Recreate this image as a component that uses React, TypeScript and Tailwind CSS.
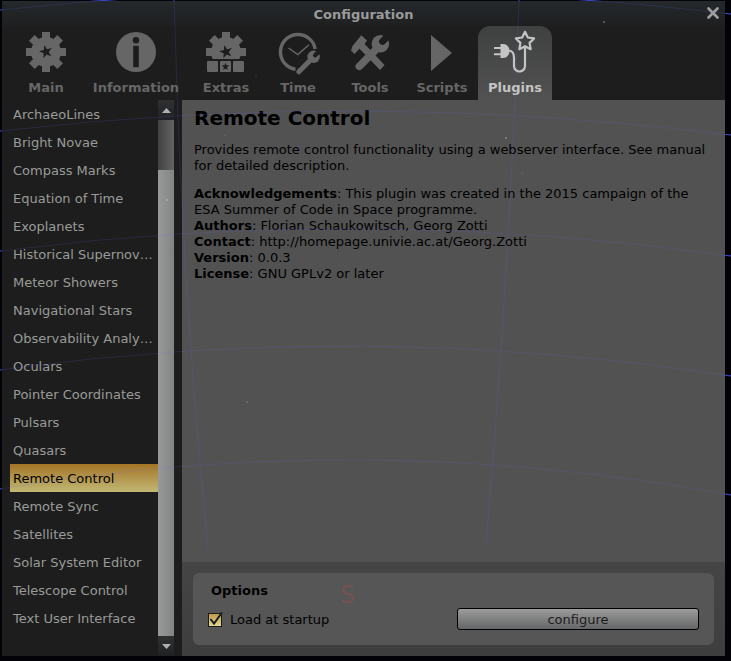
import { useState, type ReactNode } from 'react';

const plugins = [
  'ArchaeoLines',
  'Bright Novae',
  'Compass Marks',
  'Equation of Time',
  'Exoplanets',
  'Historical Supernovae',
  'Meteor Showers',
  'Navigational Stars',
  'Observability Analysis',
  'Oculars',
  'Pointer Coordinates',
  'Pulsars',
  'Quasars',
  'Remote Control',
  'Remote Sync',
  'Satellites',
  'Solar System Editor',
  'Telescope Control',
  'Text User Interface',
];

// Five pointed star as an SVG points string
const star = (cx: number, cy: number, outer: number, inner: number, turn: number) =>
  Array.from({ length: 10 }, (_, i) => {
    const r = i % 2 === 0 ? outer : inner;
    const a = ((i * 36 + turn - 90) * Math.PI) / 180;
    return `${(cx + r * Math.cos(a)).toFixed(2)},${(cy + r * Math.sin(a)).toFixed(2)}`;
  }).join(' ');

function Icon({ children }: { children: ReactNode }) {
  return (
    <svg viewBox="0 0 40 40" className="size-10 overflow-visible" fill="currentColor" aria-hidden="true">
      {children}
    </svg>
  );
}

function Gear() {
  return (
    <>
      <circle cx="20" cy="20" r="15" />
      {[0, 45, 90, 135].map((angle) => (
        <rect key={angle} x="16" y="0" width="8" height="40" transform={`rotate(${angle} 20 20)`} />
      ))}
      <polygon points={star(20, 19.8, 7, 2.7, -14)} className="fill-[#1d1d1d]" />
    </>
  );
}

const MainIcon = () => (
  <Icon>
    <Gear />
  </Icon>
);

const InfoIcon = () => (
  <Icon>
    <circle cx="20" cy="20" r="20" />
    <g className="fill-[#1d1d1d]">
      <circle cx="20" cy="8.3" r="3.2" />
      <rect x="17.2" y="13.8" width="5.6" height="21.4" />
    </g>
  </Icon>
);

const ExtrasIcon = () => (
  <Icon>
    <clipPath id="gear-top">
      <rect x="0" y="0" width="40" height="27" />
    </clipPath>
    <g clipPath="url(#gear-top)">
      <Gear />
    </g>
    <rect x="1" y="29" width="11" height="11" rx="1" />
    <rect x="14" y="29" width="11" height="11" rx="1" />
    <rect x="27" y="29" width="11" height="11" rx="1" />
    <polygon points={star(19.5, 34.7, 4, 1.7, 0)} className="fill-[#1d1d1d]" />
  </Icon>
);

const TimeIcon = () => (
  <Icon>
    <g fill="none" stroke="currentColor">
      <path d="M17.5 37.3A17.5 17.5 0 1 1 37.2 17" strokeWidth="3.4" />
      <path d="M10.5 16l9.3 6.5L31 12.8" strokeWidth="1.5" />
      <path d="M20.8 39.8L33 27.5" strokeWidth="5" strokeLinecap="round" />
    </g>
    <circle cx="35.6" cy="24.8" r="6.2" />
    <path d="M37.2 23.2L44 16.4" className="stroke-[#1d1d1d]" strokeWidth="4.4" strokeLinecap="round" />
  </Icon>
);

const ToolsIcon = () => (
  <Icon>
    <path d="M11.3 3.3L17 8.6L14.6 12L34.5 33L30 38L9.5 16.8L4.5 22L1 18.5L2.5 14Z" />
    <path d="M9.3 34.3L26 17.5" stroke="currentColor" strokeWidth="7.5" strokeLinecap="round" />
    <circle cx="30.4" cy="11.8" r="8.8" />
    <path d="M32.6 9.4L42 0" className="stroke-[#1d1d1d]" strokeWidth="7" strokeLinecap="round" />
  </Icon>
);

const ScriptsIcon = () => (
  <Icon>
    <path d="M9 3L30 21L9 39Z" />
  </Icon>
);

const PluginsIcon = () => (
  <Icon>
    <path d="M5.500 12h2.500c4 0 6.500 3.500 6.500 7s-2.500 7-6.500 7h-2.500Z" />
    <g fill="none" stroke="currentColor" strokeWidth="2.2">
      <path d="M-1 16h7M-1 22.300h7" strokeWidth="2" />
      <path d="M13 18.500c4 0 6 3 6 7v8.500a5.500 5.500 0 0 0 11 0V14" />
      <polygon points={star(30, 9.4, 9.6, 4.8, 0)} strokeLinejoin="round" />
    </g>
  </Icon>
);

const tabs = [
  { name: 'Main', width: 'w-[72px]', icon: <MainIcon /> },
  { name: 'Information', width: 'w-[108px]', icon: <InfoIcon /> },
  { name: 'Extras', width: 'w-[72px]', icon: <ExtrasIcon /> },
  { name: 'Time', width: 'w-[72px]', icon: <TimeIcon /> },
  { name: 'Tools', width: 'w-[72px]', icon: <ToolsIcon /> },
  { name: 'Scripts', width: 'w-[72px]', icon: <ScriptsIcon /> },
  { name: 'Plugins', width: 'w-[74px]', icon: <PluginsIcon /> },
];

// Celestial grid, drawn once behind the window and once faintly through it
function SkyGrid({ className }: { className: string }) {
  return (
    <svg
      viewBox="0 0 731 661"
      preserveAspectRatio="none"
      className={`pointer-events-none absolute inset-0 size-full ${className}`}
      fill="none"
      stroke="currentColor"
      aria-hidden="true"
    >
      <path d="M0 10Q365 -30 731 14" />
      <path d="M0 131Q365 89 731 135" />
      <path d="M0 251Q365 204 731 256" />
      <path d="M0 370Q365 319 731 376" />
      <path d="M0 489Q365 428 731 495" />
      <path d="M174 0Q181 280 208 550" />
      <path d="M519 0Q510 260 486 545" />
    </svg>
  );
}

function Stars() {
  return (
    <svg
      viewBox="0 0 731 661"
      preserveAspectRatio="none"
      className="pointer-events-none absolute inset-0 size-full fill-white opacity-30"
      aria-hidden="true"
    >
      <circle cx="604" cy="22" r="1" />
      <circle cx="167" cy="200" r="1" />
      <circle cx="506" cy="138" r="1" />
      <circle cx="247" cy="402" r="0.8" />
      <circle cx="225" cy="135" r="0.6" />
      <circle cx="522" cy="173" r="0.6" />
      <circle cx="256" cy="76" r="0.6" />
    </svg>
  );
}

function App() {
  const [activeTab, setActiveTab] = useState('Plugins');
  const [selected, setSelected] = useState('Remote Control');
  const [loadAtStartup, setLoadAtStartup] = useState(true);

  return (
    <div className="relative flex min-h-screen bg-[#020208] pt-px pr-1.5 pb-[5px] pl-0.5 font-['DejaVu_Sans',sans-serif] text-[13px] leading-4">
      <SkyGrid className="text-[#3546c8]" />

      <div className="relative flex min-w-0 flex-1 flex-col bg-[#1d1d1d]">
        {/* Title bar */}
        <header className="relative flex h-[25px] items-center justify-center bg-linear-to-b from-[#25292c] to-[#1e1f20] pt-0.5">
          <h1 className="font-bold text-[#999b9b]">Configuration</h1>
          <button type="button" aria-label="Close" className="absolute top-1.5 right-1.5 text-[#a0a0a0]">
            <svg viewBox="0 0 12 12" className="size-3" stroke="currentColor" strokeWidth="2.6" strokeLinecap="round">
              <path d="M1.500 1.500l9 9M10.500 1.500l-9 9" />
            </svg>
          </button>
        </header>

        {/* Tabs */}
        <nav className="flex pl-2">
          {tabs.map((tab) => (
            <button
              key={tab.name}
              type="button"
              onClick={() => setActiveTab(tab.name)}
              className={`flex h-[74px] shrink-0 flex-col items-center gap-2 pt-1.5 font-bold ${tab.width} ${
                activeTab === tab.name
                  ? 'rounded-t-xl bg-linear-to-b from-[#3f4040] to-[#525252] text-[#c4c4c4]'
                  : 'text-[#666666]'
              }`}
            >
              {tab.icon}
              {tab.name}
            </button>
          ))}
        </nav>

        <div className="flex min-h-0 flex-1">
          {/* Plugin list */}
          <div className="flex w-[172px] shrink-0 pl-2">
            <ul className="min-w-0 flex-1">
              {plugins.map((name) => (
                <li key={name}>
                  <button
                    type="button"
                    onClick={() => setSelected(name)}
                    className={`block h-7 w-full truncate pt-0.5 pr-1 pl-[3px] text-left ${
                      selected === name
                        ? 'bg-linear-to-b from-[#a47525] to-[#c0b873] text-black'
                        : 'text-[#999b98]'
                    }`}
                  >
                    {name}
                  </button>
                </li>
              ))}
            </ul>

            {/* Scrollbar */}
            <div className="flex w-4 flex-col">
              <div className="flex h-5 items-center justify-center bg-linear-to-b from-[#303030] to-[#1f2225]">
                <svg viewBox="0 0 9 5" className="h-[5px] w-[9px] fill-[#b0b0b0]">
                  <path d="M0 5L4.500 0L9 5Z" />
                </svg>
              </div>
              <div className="h-[50px] bg-linear-to-r from-[#424242] to-[#646464]" />
              <div className="flex-1 bg-linear-to-r from-[#989a9a] to-[#828484]" />
              <div className="flex h-5 items-center justify-center bg-linear-to-b from-[#303030] to-[#1f2225]">
                <svg viewBox="0 0 9 5" className="h-[5px] w-[9px] fill-[#b0b0b0]">
                  <path d="M0 0L4.500 5L9 0Z" />
                </svg>
              </div>
            </div>
          </div>

          {/* Plugin details */}
          <main className="ml-2 flex min-w-0 flex-1 flex-col bg-[#525252] text-black">
            <article className="flex-1 pt-1.5 pr-2 pl-3">
              <h2 className="mb-3 text-xl leading-6 font-bold">Remote Control</h2>
              <p className="mb-3">
                Provides remote control functionality using a webserver interface. See manual for detailed description.
              </p>
              <p>
                <b>Acknowledgements</b>: This plugin was created in the 2015 campaign of the ESA Summer of Code in Space
                programme.
              </p>
              <p>
                <b>Authors</b>: Florian Schaukowitsch, Georg Zotti
              </p>
              <p>
                <b>Contact</b>: <a href="http://homepage.univie.ac.at/Georg.Zotti">http://homepage.univie.ac.at/Georg.Zotti</a>
              </p>
              <p>
                <b>Version</b>: 0.0.3
              </p>
              <p>
                <b>License</b>: GNU GPLv2 or later
              </p>
            </article>

            <div className="bg-linear-to-b from-[#454545] to-[#3e3e3e] p-[11px]">
              <section className="relative h-[72px] rounded-md bg-[#565656] px-[15px] pt-[9px]">
                <h3 className="pl-[3px] leading-[18px] font-bold">Options</h3>
                {/* South marker of the horizon */}
                <span className="absolute top-2 left-[147px] text-2xl leading-7 text-[#755252]">S</span>
                <div className="mt-2 flex items-center justify-between">
                  <label className="flex items-center gap-2 pt-0.5">
                    <span className="relative flex">
                      <input
                        type="checkbox"
                        checked={loadAtStartup}
                        onChange={(e) => setLoadAtStartup(e.target.checked)}
                        className="size-3.5 appearance-none border border-[#1c1c1c] bg-linear-to-b from-[#c09a48] to-[#e2da96]"
                      />
                      {loadAtStartup && (
                        <svg
                          viewBox="0 0 14 14"
                          className="pointer-events-none absolute inset-0 size-3.5 overflow-visible"
                          fill="none"
                          stroke="#1c1c1c"
                          strokeWidth="2"
                        >
                          <path d="M2.500 6L6 10.500L14 -0.500" />
                        </svg>
                      )}
                    </span>
                    Load at startup
                  </label>
                  <button
                    type="button"
                    className="h-[22px] w-[242px] rounded-[3px] border border-black bg-linear-to-b from-[#9c9c9c] to-[#656667] pt-0.5 text-[#1c1c1c]"
                  >
                    configure
                  </button>
                </div>
              </section>
            </div>
          </main>
        </div>
      </div>

      <SkyGrid className="text-[#6666ff] opacity-15" />
      <Stars />
    </div>
  );
}

export default App;
